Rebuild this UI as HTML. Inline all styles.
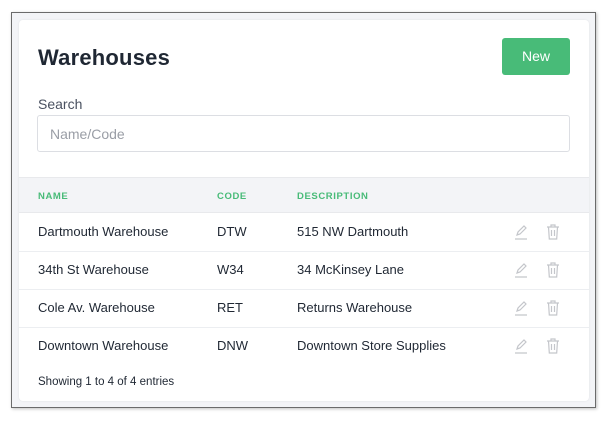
<!DOCTYPE html><html><head><style>
body{margin:0;width:614px;height:426px;background:#fff;font-family:"Liberation Sans",sans-serif;position:relative;overflow:hidden}
.frame{position:absolute;left:11px;top:12px;width:583px;height:394px;border:1px solid #6b6b6b;background:#f3f4f7;box-shadow:1px 1px 3px rgba(0,0,0,.25)}
.card{position:absolute;left:7px;top:7px;width:570px;height:381px;background:#fff;border-radius:4px;box-shadow:0 0 2px rgba(0,0,0,.08)}
h1{position:absolute;left:19px;top:25px;margin:0;font-size:22px;font-weight:bold;color:#1f2733;letter-spacing:.2px}
.btn{position:absolute;left:483px;top:18px;width:68px;height:37px;background:#48bb78;border-radius:3px;color:#fff;font-size:14px;line-height:37px;text-align:center}
.lbl{position:absolute;left:19px;top:76px;font-size:14px;color:#4a5160}
.inp{position:absolute;left:18px;top:95px;width:533px;height:37px;border:1px solid #dcdee3;border-radius:3px;color:#9a9ea6;font-size:14px;line-height:36px;padding-left:12px;box-sizing:border-box}
.th{position:absolute;left:0;top:157px;width:570px;height:36px;background:#f3f4f7;border-top:1px solid #e8e9ec;border-bottom:1px solid #e8e9ec;box-sizing:border-box}
.th span{position:absolute;top:13px;font-size:9.5px;font-weight:bold;color:#48bb78;letter-spacing:.6px}
.row{position:absolute;left:0;width:570px;height:38px;border-bottom:1px solid #eceef1;font-size:13px;color:#1f2733}
.row span{position:absolute;top:11px}
.foot{position:absolute;left:19px;top:356px;font-size:11.5px;color:#1f2733}
svg{position:absolute;top:10px}
</style></head><body><div class="frame"><div class="card">
<h1>Warehouses</h1><div class="btn">New</div>
<div class="lbl">Search</div><div class="inp">Name/Code</div>
<div class="th"><span style="left:19px">NAME</span><span style="left:198px">CODE</span><span style="left:278px">DESCRIPTION</span></div>
<div class="row" style="top:193px"><span style="left:19px">Dartmouth Warehouse</span><span style="left:198px">DTW</span><span style="left:278px">515 NW Dartmouth</span>
<svg style="left:494px" width="16" height="18" viewBox="0 0 16 18" fill="none" stroke="#c4c6cb" stroke-width="1.2"><path d="M4 12l1-3 6-6 2 2-6 6zM2 16h12"/></svg>
<svg style="left:526px" width="16" height="18" viewBox="0 0 16 18" fill="none" stroke="#c4c6cb" stroke-width="1.2"><path d="M2 4h12M6 4V2h4v2M3.5 4l.8 12h7.4l.8-12M6.5 7v6M9.5 7v6"/></svg></div>
<div class="row" style="top:231px"><span style="left:19px">34th St Warehouse</span><span style="left:198px">W34</span><span style="left:278px">34 McKinsey Lane</span>
<svg style="left:494px" width="16" height="18" viewBox="0 0 16 18" fill="none" stroke="#c4c6cb" stroke-width="1.2"><path d="M4 12l1-3 6-6 2 2-6 6zM2 16h12"/></svg>
<svg style="left:526px" width="16" height="18" viewBox="0 0 16 18" fill="none" stroke="#c4c6cb" stroke-width="1.2"><path d="M2 4h12M6 4V2h4v2M3.5 4l.8 12h7.4l.8-12M6.5 7v6M9.5 7v6"/></svg></div>
<div class="row" style="top:269px"><span style="left:19px">Cole Av. Warehouse</span><span style="left:198px">RET</span><span style="left:278px">Returns Warehouse</span>
<svg style="left:494px" width="16" height="18" viewBox="0 0 16 18" fill="none" stroke="#c4c6cb" stroke-width="1.2"><path d="M4 12l1-3 6-6 2 2-6 6zM2 16h12"/></svg>
<svg style="left:526px" width="16" height="18" viewBox="0 0 16 18" fill="none" stroke="#c4c6cb" stroke-width="1.2"><path d="M2 4h12M6 4V2h4v2M3.5 4l.8 12h7.4l.8-12M6.5 7v6M9.5 7v6"/></svg></div>
<div class="row" style="top:307px;border-bottom:none"><span style="left:19px">Downtown Warehouse</span><span style="left:198px">DNW</span><span style="left:278px">Downtown Store Supplies</span>
<svg style="left:494px" width="16" height="18" viewBox="0 0 16 18" fill="none" stroke="#c4c6cb" stroke-width="1.2"><path d="M4 12l1-3 6-6 2 2-6 6zM2 16h12"/></svg>
<svg style="left:526px" width="16" height="18" viewBox="0 0 16 18" fill="none" stroke="#c4c6cb" stroke-width="1.2"><path d="M2 4h12M6 4V2h4v2M3.5 4l.8 12h7.4l.8-12M6.5 7v6M9.5 7v6"/></svg></div>
<div class="foot">Showing 1 to 4 of 4 entries</div>
</div></div></body></html>
